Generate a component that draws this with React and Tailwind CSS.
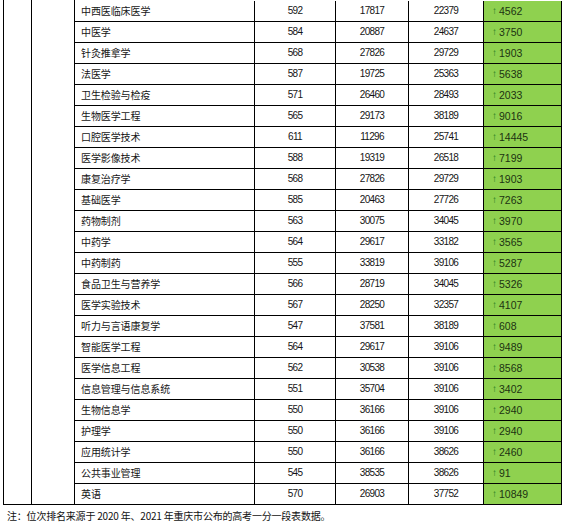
import React from "react";

const rows = [
  ["中西医临床医学", "592", "17817", "22379", "4562"],
  ["中医学", "584", "20887", "24637", "3750"],
  ["针灸推拿学", "568", "27826", "29729", "1903"],
  ["法医学", "587", "19725", "25363", "5638"],
  ["卫生检验与检疫", "571", "26460", "28493", "2033"],
  ["生物医学工程", "565", "29173", "38189", "9016"],
  ["口腔医学技术", "611", "11296", "25741", "14445"],
  ["医学影像技术", "588", "19319", "26518", "7199"],
  ["康复治疗学", "568", "27826", "29729", "1903"],
  ["基础医学", "585", "20463", "27726", "7263"],
  ["药物制剂", "563", "30075", "34045", "3970"],
  ["中药学", "564", "29617", "33182", "3565"],
  ["中药制药", "555", "33819", "39106", "5287"],
  ["食品卫生与营养学", "566", "28719", "34045", "5326"],
  ["医学实验技术", "567", "28250", "32357", "4107"],
  ["听力与言语康复学", "547", "37581", "38189", "608"],
  ["智能医学工程", "564", "29617", "39106", "9489"],
  ["医学信息工程", "562", "30538", "39106", "8568"],
  ["信息管理与信息系统", "551", "35704", "39106", "3402"],
  ["生物信息学", "550", "36166", "39106", "2940"],
  ["护理学", "550", "36166", "39106", "2940"],
  ["应用统计学", "550", "36166", "38626", "2460"],
  ["公共事业管理", "545", "38535", "38626", "91"],
  ["英语", "570", "26903", "37752", "10849"],
];

const cjk = { fontFamily: '"Noto Sans CJK SC", "Noto Sans", sans-serif' };
const num = { fontFamily: '"Liberation Sans", Arial, sans-serif' };

export default function App() {
  return (
    <div className="w-[565px] h-[526px] bg-white overflow-hidden text-[#151515]">
      <div className="flex ml-[3px] w-[559px] border-l border-b border-black">
        <div className="w-[28px] border-r border-black" />
        <div className="w-[43px] border-r border-black" />
        <div className="w-[487px] flex flex-col pt-[1px]">
          {rows.map((r, i) => (
            <div key={i} className="flex h-[21px] border-b border-black last:border-b-0 last:h-[20px]">
              <div
                className="w-[180px] border-r border-black flex items-center pl-[6px] text-[10px] tracking-[-0.1px] leading-none"
                style={cjk}
              >
                {r[0]}
              </div>
              <div
                className="w-[81px] border-r border-black flex items-center justify-center text-[10px] tracking-[-0.7px] leading-none"
                style={num}
              >
                {r[1]}
              </div>
              <div
                className="w-[73px] border-r border-black flex items-center justify-center text-[10px] tracking-[-0.7px] leading-none"
                style={num}
              >
                {r[2]}
              </div>
              <div
                className="w-[75px] border-r border-black flex items-center justify-center text-[10px] tracking-[-0.7px] leading-none"
                style={num}
              >
                {r[3]}
              </div>
              <div
                className="w-[78px] border-r border-black bg-[#8fd14f] flex items-center pl-[8px] text-[10.5px] leading-none"
                style={num}
              >
                <span className="text-[#237a22] text-[10px] mr-[2px]">↑</span>
                <span className="text-[#1c3312]">{r[4]}</span>
              </div>
            </div>
          ))}
        </div>
      </div>
      <div className="pl-[7px] pt-[4px] text-[10px] leading-[14px] tracking-[-0.2px] text-[#111]" style={cjk}>
        注：位次排名来源于 2020 年、2021 年重庆市公布的高考一分一段表数据。
      </div>
    </div>
  );
}
